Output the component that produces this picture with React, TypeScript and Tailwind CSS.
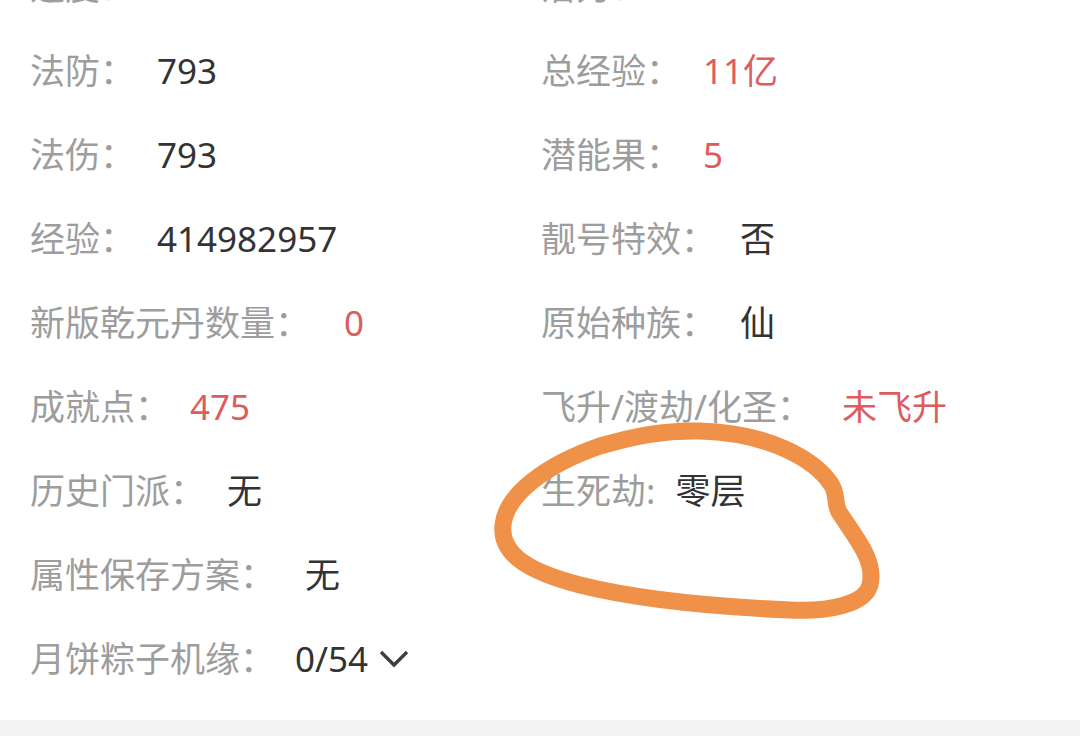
type Row = {
  label: string;
  value?: string;
  tone?: 'dark' | 'red';
  gap: string;
  chevron?: boolean;
};

const left: Row[] = [
  { label: '速度：', value: '157', tone: 'dark', gap: 'ml-[22px]' },
  { label: '法防：', value: '793', tone: 'dark', gap: 'ml-[22px]' },
  { label: '法伤：', value: '793', tone: 'dark', gap: 'ml-[22px]' },
  { label: '经验：', value: '414982957', tone: 'dark', gap: 'ml-[22px]' },
  { label: '新版乾元丹数量：', value: '0', tone: 'red', gap: 'ml-[34px]' },
  { label: '成就点：', value: '475', tone: 'red', gap: 'ml-[20px]' },
  { label: '历史门派：', value: '无', tone: 'dark', gap: 'ml-[22px]' },
  { label: '属性保存方案：', value: '无', tone: 'dark', gap: 'ml-[30px]' },
  { label: '月饼粽子机缘：', value: '0/54', tone: 'dark', gap: 'ml-[20px]', chevron: true },
];

const right: Row[] = [
  { label: '潜力：', value: '0', tone: 'dark', gap: 'ml-[22px]' },
  { label: '总经验：', value: '11亿', tone: 'red', gap: 'ml-[22px]' },
  { label: '潜能果：', value: '5', tone: 'red', gap: 'ml-[22px]' },
  { label: '靓号特效：', value: '否', tone: 'dark', gap: 'ml-[24px]' },
  { label: '原始种族：', value: '仙', tone: 'dark', gap: 'ml-[24px]' },
  { label: '飞升/渡劫/化圣：', value: '未飞升', tone: 'red', gap: 'ml-[30px]' },
  { label: '生死劫:', value: '零层', tone: 'dark', gap: 'ml-[20px]' },
  { label: '', gap: '' },
  { label: '', gap: '' },
];

function Cell({ row }: { row: Row }) {
  if (!row.label) return <div className="h-[84px]" />
  return (
    <div className="h-[84px] flex items-center whitespace-nowrap">
      <span className="text-[#9d9d9d]">{row.label}</span>
      <span className={`${row.gap} ${row.tone === 'red' ? 'text-[#de5b5e]' : 'text-[#333333]'}`}>
        {row.value}
      </span>
      {row.chevron && (
        <svg className="ml-[10px] mt-[2px]" width="32" height="20" viewBox="0 0 32 20">
          <polyline points="3,3 16,16 29,3" fill="none" stroke="#3f3f3f" strokeWidth="3.4" />
        </svg>
      )}
    </div>
  );
}

export default function App() {
  return (
    <div
      className="relative w-[1080px] h-[745px] overflow-hidden bg-white text-[35px] leading-none"
      style={{ fontFamily: '"Noto Sans", "Noto Sans CJK SC", sans-serif' }}
    >
      <div className="-mt-[56px] pl-[30px] grid grid-cols-[511px_1fr]">
        {left.map((row, i) => (
          <div key={i} className="contents">
            <Cell row={row} />
            <Cell row={right[i]} />
          </div>
        ))}
      </div>
      <div className="mt-[20px] h-[16px] bg-[#f4f4f4]" />

      {/* hand-drawn annotation */}
      <svg className="absolute inset-0 pointer-events-none" width="1080" height="745" viewBox="0 0 1080 745">
        <path
          d="M 700 431 C 770 433, 815 460, 831 484 C 838 494, 834 503, 839 512 C 855 537, 876 560, 870 585 C 865 604, 830 612, 790 610 C 720 607, 640 600, 580 585 C 530 572, 500 555, 503 525 C 506 495, 545 465, 600 446 C 635 436, 665 430, 700 431 Z"
          fill="none"
          stroke="#f0914a"
          strokeWidth="17"
          strokeLinecap="round"
          strokeLinejoin="round"
        />
      </svg>
    </div>
  );
}
